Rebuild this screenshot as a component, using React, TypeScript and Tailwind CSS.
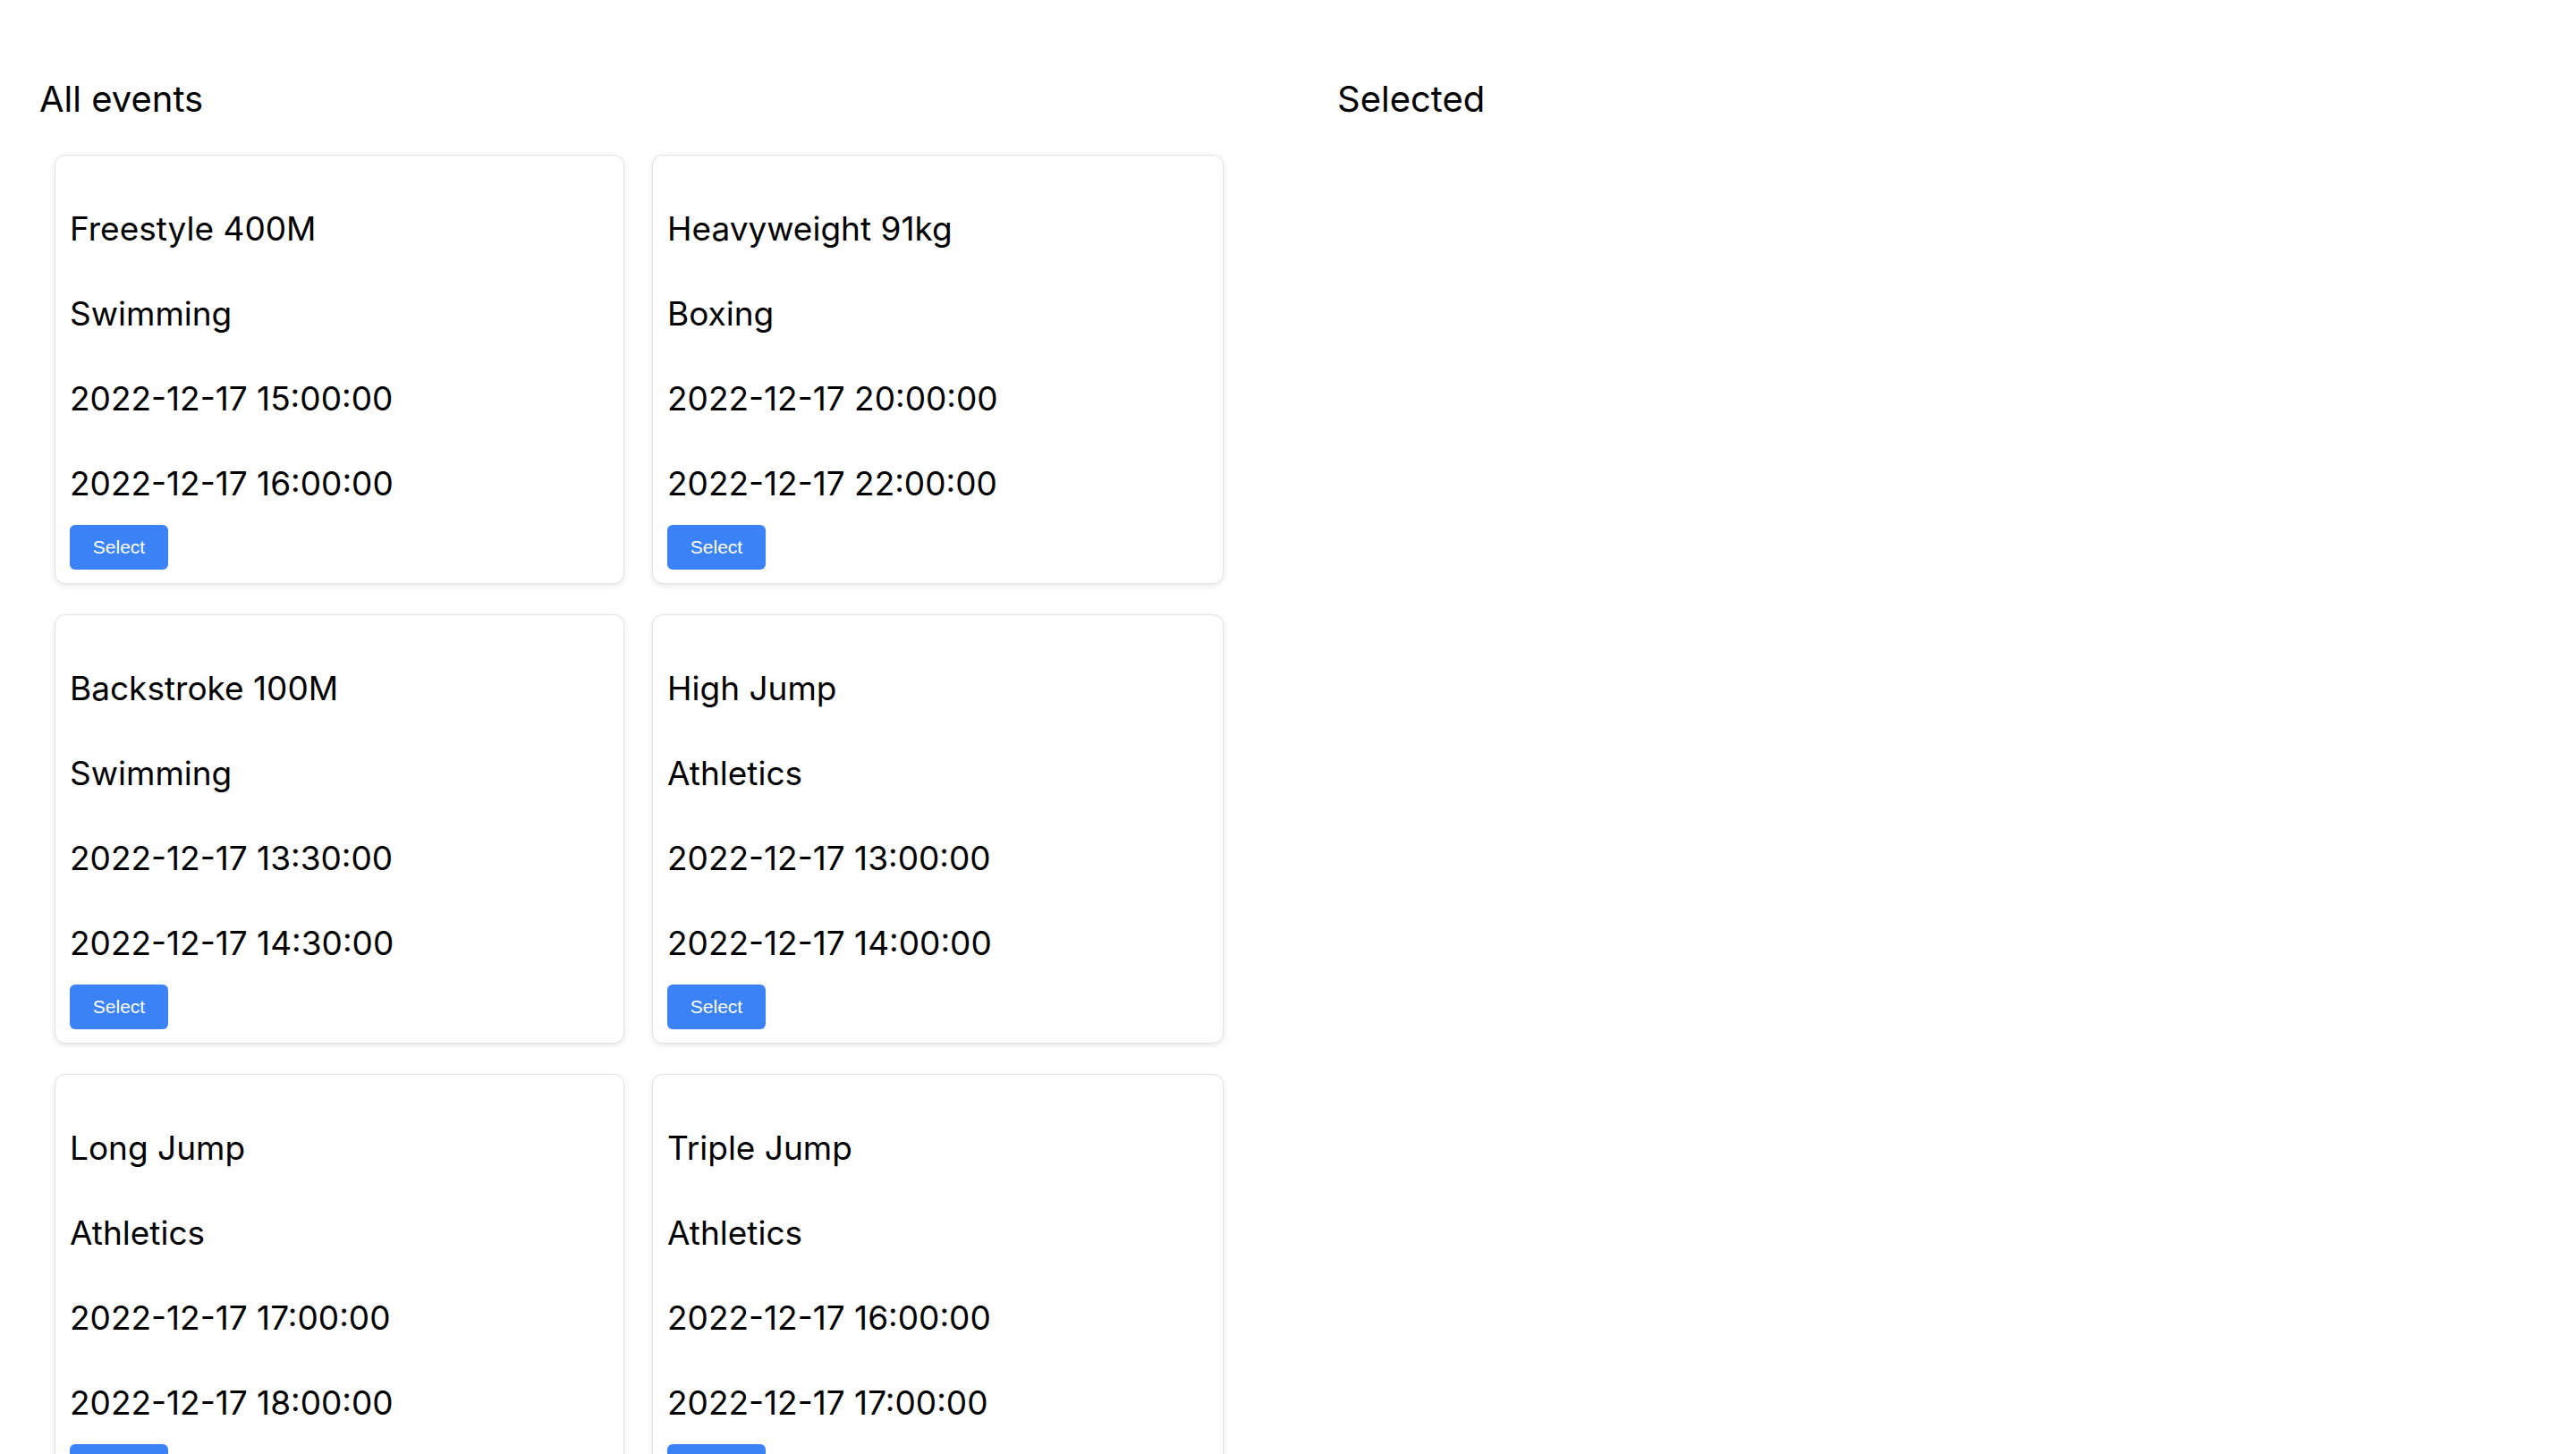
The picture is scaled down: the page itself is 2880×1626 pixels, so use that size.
import React from "react";

type Ev = { name: string; sport: string; start: string; end: string };

const events: Ev[] = [
  { name: "Freestyle 400M", sport: "Swimming", start: "2022-12-17 15:00:00", end: "2022-12-17 16:00:00" },
  { name: "Heavyweight 91kg", sport: "Boxing", start: "2022-12-17 20:00:00", end: "2022-12-17 22:00:00" },
  { name: "Backstroke 100M", sport: "Swimming", start: "2022-12-17 13:30:00", end: "2022-12-17 14:30:00" },
  { name: "High Jump", sport: "Athletics", start: "2022-12-17 13:00:00", end: "2022-12-17 14:00:00" },
  { name: "Long Jump", sport: "Athletics", start: "2022-12-17 17:00:00", end: "2022-12-17 18:00:00" },
  { name: "Triple Jump", sport: "Athletics", start: "2022-12-17 16:00:00", end: "2022-12-17 17:00:00" },
];

function Card({ ev }: { ev: Ev }) {
  const rows = [ev.name, ev.sport, ev.start, ev.end];
  return (
    <div className="rounded-[12px] border border-[#e3e3e3] bg-white px-[16px] pt-[16px] pb-[15px] shadow-[0_2px_6px_rgba(0,0,0,0.10)]">
      <div className="mt-[38px] flex flex-col gap-[39px]">
        {rows.map((r, i) => (
          <div key={i} className="h-[56px] whitespace-nowrap text-[37px] leading-[56px] text-black">
            {r}
          </div>
        ))}
      </div>
      <button
        className="mt-[18px] flex h-[50px] w-[110px] items-center justify-center rounded-[6px] bg-[#3b82f6] text-[21px] text-white"
        style={{ fontFamily: '"Liberation Sans", Arial, sans-serif' }}
      >
        Select
      </button>
    </div>
  );
}

export default function App() {
  return (
    <div
      className="flex min-h-screen bg-white px-[44px] pt-[87px] text-black"
      style={{ fontFamily: 'Inter, "Noto Sans", sans-serif' }}
    >
      <div className="w-[1407px] shrink-0">
        <h2 className="h-[48px] text-[40px] leading-[48px] font-normal">All events</h2>
        <div className="mt-[38px] ml-[17px] grid grid-cols-[637px_639px] gap-x-[31px] gap-y-[34px]">
          {events.map((ev, i) => (
            <Card key={i} ev={ev} />
          ))}
        </div>
      </div>
      <div className="ml-[44px] flex-1">
        <h2 className="h-[48px] text-[40px] leading-[48px] font-normal">Selected</h2>
      </div>
    </div>
  );
}
